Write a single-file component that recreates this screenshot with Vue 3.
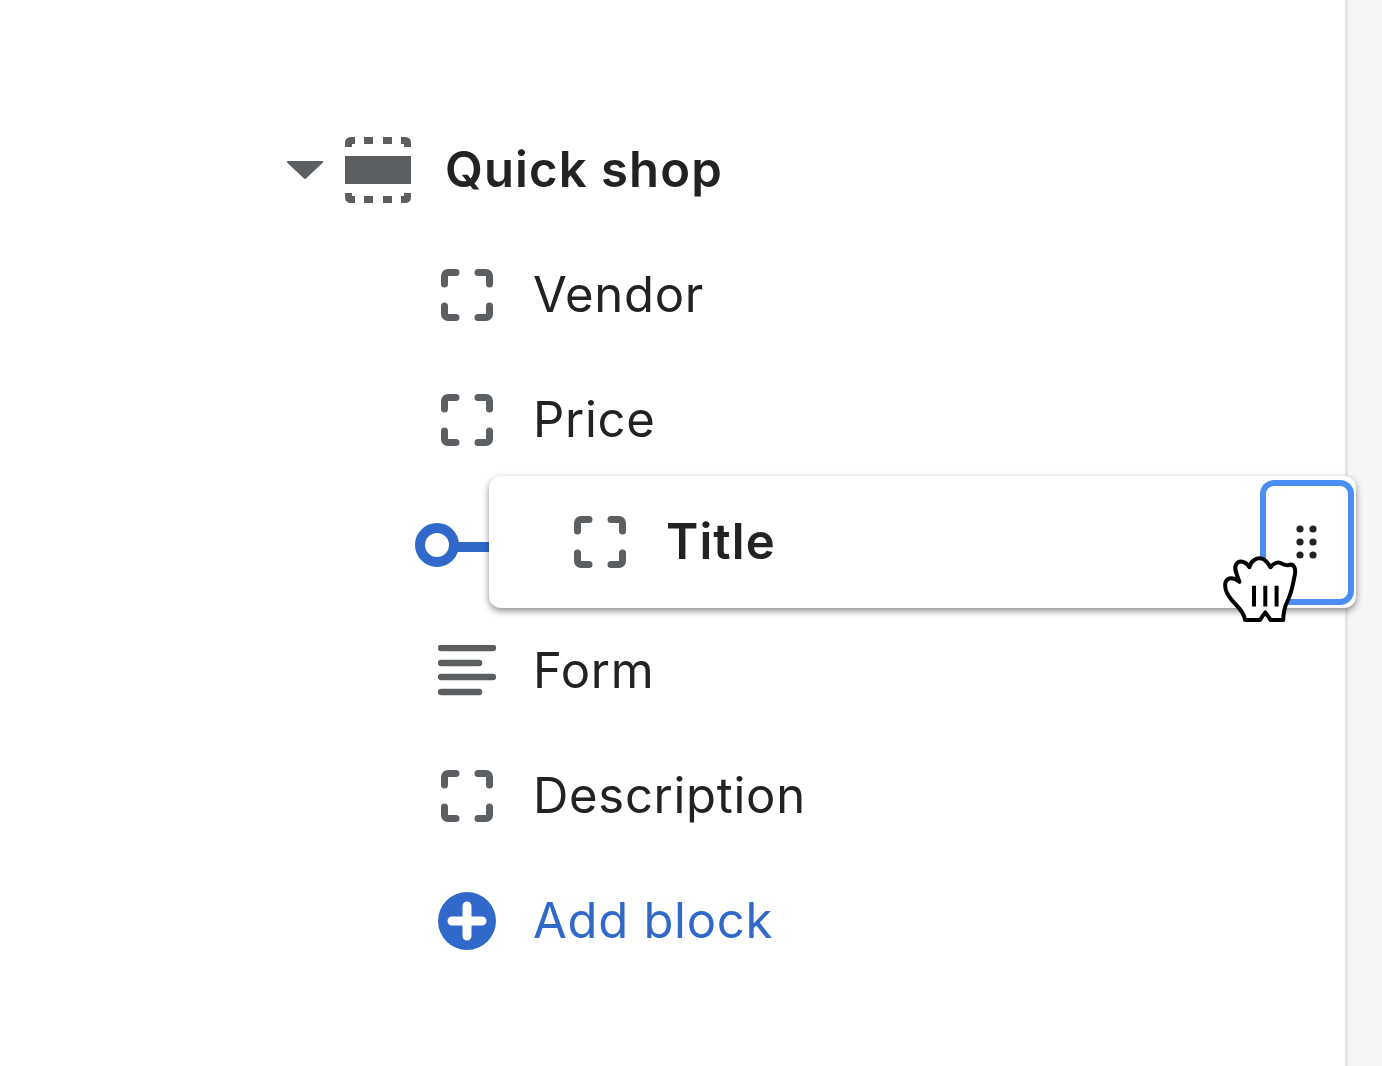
<template>
  <div class="page">
    <main class="tree">
      <div class="header">
        <svg class="caret" viewBox="0 0 36 18"><path d="M1 0H35C36 0 36.500 1 36 1.500L19 17.500C18.500 18 17.500 18 17 17.500L0 1.500C-.5 1 0 0 1 0Z" /></svg>
        <svg class="section-icon" viewBox="0 0 66 66">
          <rect x="0" y="19" width="66" height="28" />
          <g class="dash">
            <path d="M3.500 10V5.500A2 2 0 0 1 5.500 3.500H10" />
            <path d="M19 3.500H28" />
            <path d="M38 3.500H47" />
            <path d="M56 3.500H60.500A2 2 0 0 1 62.500 5.500V10" />
            <path d="M3.500 56V60.500A2 2 0 0 0 5.500 62.500H10" />
            <path d="M19 62.500H28" />
            <path d="M38 62.500H47" />
            <path d="M56 62.500H60.500A2 2 0 0 0 62.500 60.500V56" />
          </g>
        </svg>
        <span class="header-label">Quick shop</span>
      </div>

      <div
        v-for="item in items"
        :key="item.label"
        class="row"
        :class="{ 'row-link': item.icon === 'plus', 'row-drop': item.dragging }"
      >
        <span class="icon-box">
          <svg v-if="item.icon === 'block'" class="bracket" viewBox="0 0 52 52">
            <path :d="bracketPath" />
          </svg>
          <svg v-else-if="item.icon === 'lines'" class="lines" viewBox="0 0 58 51">
            <path d="M3 3H55M3 18H41M3 32H55M3 47H41" />
          </svg>
          <svg v-else-if="item.icon === 'plus'" class="plus" viewBox="0 0 58 58">
            <circle cx="29" cy="29" r="29" />
            <path d="M29 14V44M14 29H44" />
          </svg>
        </span>
        <span>{{ item.label }}</span>

        <template v-if="item.dragging">
          <svg class="connector" viewBox="0 0 74 46">
            <circle cx="22" cy="22" r="17" />
            <path d="M39 24H74" />
          </svg>
          <div class="drag-card">
            <svg class="bracket" viewBox="0 0 52 52">
              <path :d="bracketPath" />
            </svg>
            <span class="drag-label">Title</span>
            <div class="handle">
              <svg class="dots" viewBox="0 0 24 36">
                <circle v-for="d in dots" :key="d.x + '-' + d.y" :cx="d.x" :cy="d.y" r="3.6" />
              </svg>
            </div>
            <svg class="hand" viewBox="60 260 240 220">
              <path
                d="M135 465C132 440 112 425 95 405C82 390 72 370 76 352C80 336 100 334 118 350C112 330 100 312 108 298C116 284 136 286 148 306C152 286 170 276 186 280C200 284 206 298 212 306C220 292 236 288 248 296C256 300 262 302 272 298C284 298 288 312 285 328C281 350 276 376 268 396C262 412 250 425 250 465H212C206 455 200 447 196 442C190 450 184 458 180 465Z"
              />
              <path class="hand-lines" d="M162 362V424M196 362V424M230 362V424" />
            </svg>
          </div>
        </template>
      </div>
    </main>
    <aside class="rail"></aside>
  </div>
</template>

<script setup>
const bracketPath =
  "M3.5 15V7A3.5 3.5 0 0 1 7 3.5H15M37 3.5H45A3.5 3.5 0 0 1 48.5 7V15M3.5 37V45A3.5 3.5 0 0 0 7 48.5H15M37 48.5H45A3.5 3.5 0 0 0 48.5 45V37"

const items = [
  { label: "Vendor", icon: "block" },
  { label: "Price", icon: "block" },
  { label: "", icon: "none", dragging: true },
  { label: "Form", icon: "lines" },
  { label: "Description", icon: "block" },
  { label: "Add block", icon: "plus" },
]

const dots = []
for (const y of [5, 18, 31]) {
  for (const x of [5, 18]) dots.push({ x, y })
}
</script>

<style scoped>
.page {
  display: flex;
  height: 1066px;
  overflow: hidden;
  background: #fff;
  color: #202223;
  font-family: Inter, "Liberation Sans", sans-serif;
  font-size: 49px;
  letter-spacing: 0.7px;
}
.tree {
  flex: 1;
  min-width: 0;
  padding-top: 107px;
}
.rail {
  width: 37px;
  background: #f6f6f7;
  border-left: 3px solid #e4e5e7;
  box-sizing: border-box;
}
.header {
  display: flex;
  align-items: center;
  height: 125px;
  padding-left: 287px;
}
.caret {
  width: 36px;
  height: 18px;
  margin-right: 22px;
  fill: #5c5f62;
}
.section-icon {
  width: 66px;
  height: 66px;
  margin-right: 34px;
  fill: #5c5f62;
}
.dash {
  fill: none;
  stroke: #5c5f62;
  stroke-width: 7;
  stroke-linejoin: round;
}
.header-label,
.drag-label {
  font-weight: 600;
  letter-spacing: 1.1px;
}
.drag-label {
  margin-bottom: 2px;
}
.row {
  position: relative;
  display: flex;
  align-items: center;
  gap: 36px;
  height: 125px;
  padding-left: 437px;
}
.row-drop {
  height: 126px;
}
.row-link {
  color: #3069c9;
}
.icon-box {
  display: flex;
  align-items: center;
  justify-content: center;
  width: 60px;
  flex-shrink: 0;
}
.bracket {
  width: 52px;
  height: 52px;
  flex-shrink: 0;
  fill: none;
  stroke: #5c5f62;
  stroke-width: 7;
  stroke-linecap: round;
}
.lines {
  width: 58px;
  height: 51px;
  fill: none;
  stroke: #5c5f62;
  stroke-width: 6.5;
  stroke-linecap: round;
}
.plus {
  width: 58px;
  height: 58px;
}
.plus circle {
  fill: #3069c9;
}
.plus path {
  fill: none;
  stroke: #fff;
  stroke-width: 9;
  stroke-linecap: round;
}
.connector {
  position: absolute;
  left: 415px;
  top: 41px;
  width: 74px;
  height: 46px;
  fill: none;
  stroke: #3069c9;
  stroke-width: 10;
}
.drag-card {
  position: absolute;
  left: 489px;
  top: -6px;
  display: flex;
  align-items: center;
  gap: 40px;
  width: 867px;
  height: 132px;
  box-sizing: border-box;
  padding: 0 2px 0 85px;
  background: #fff;
  border-radius: 12px;
  box-shadow: 0 3px 7px rgba(0, 0, 0, 0.45);
}
.handle {
  display: flex;
  align-items: center;
  justify-content: center;
  width: 94px;
  height: 125px;
  margin-left: auto;
  box-sizing: border-box;
  border: 6px solid #4b8ef5;
  border-radius: 14px;
}
.dots {
  width: 24px;
  height: 36px;
  fill: #202223;
}
.hand {
  position: absolute;
  left: 731px;
  top: 76px;
  width: 80px;
  height: 73px;
  fill: #fff;
  stroke: #000;
  stroke-width: 12;
  stroke-linejoin: round;
}
.hand-lines {
  fill: none;
}
</style>

<style>
html,
body {
  background: #fff;
}
</style>
